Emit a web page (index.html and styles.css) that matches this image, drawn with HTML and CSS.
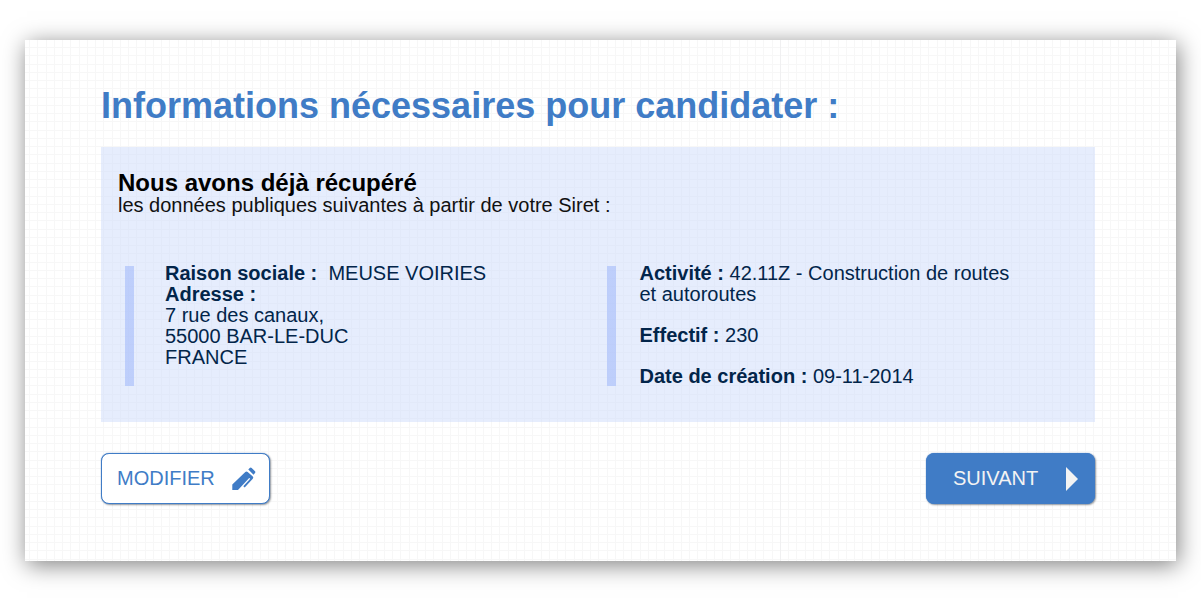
FILE: index.html
```html
<!DOCTYPE html>
<html lang="fr">
<head>
<meta charset="utf-8">
<meta name="viewport" content="width=device-width, initial-scale=1">
<title>Informations nécessaires pour candidater</title>
<link rel="stylesheet" href="styles.css">
</head>
<body>
<main class="card">
  <h1 class="title">Informations nécessaires pour candidater :</h1>
  <section class="panel">
    <h2 class="panel-title">Nous avons déjà récupéré</h2>
    <p class="panel-intro">les données publiques suivantes à partir de votre Siret :</p>
    <div class="columns">
      <div class="info">
        <p><strong>Raison sociale :</strong>&nbsp; MEUSE VOIRIES</p>
        <p><strong>Adresse :</strong></p>
        <p>7 rue des canaux,<br>55000 BAR-LE-DUC<br>FRANCE</p>
      </div>
      <div class="info info-spaced">
        <p><strong>Activité :</strong> 42.11Z - Construction de routes<br>et autoroutes</p>
        <p><strong>Effectif :</strong> 230</p>
        <p><strong>Date de création :</strong> 09-11-2014</p>
      </div>
    </div>
  </section>
  <div class="actions">
    <button type="button" class="btn btn-outline">
      MODIFIER
      <svg class="pencil" width="24" height="24" viewBox="0 0 24 24" aria-hidden="true">
        <path fill="currentColor" d="M0.300 17.500 L13.300 5 Q14.500 4 15.700 5 L20.800 9.600 Q21.800 10.600 20.800 11.700 L12.700 20.600 L11.300 19.200 L18.200 11.800 L17.200 10.900 L6 23 H0.300 Z M16.300 2.600 L17.700 1 Q18.700 0.200 19.700 1 L23 4.200 Q23.800 5 23 6 L21.500 7.700 Z"/>
      </svg>
    </button>
    <button type="button" class="btn btn-solid">
      SUIVANT
      <svg class="arrow" width="12" height="24" viewBox="0 0 12 24" aria-hidden="true">
        <path fill="currentColor" d="M0 0 L12 12 L0 24 Z"/>
      </svg>
    </button>
  </div>
</main>
</body>
</html>
```
FILE: styles.css
```css
* {
  box-sizing: border-box;
}

body {
  margin: 0;
  padding: 40px 25px;
  background: #fff;
  color: #02254a;
  font-family: "Liberation Sans", Arial, sans-serif;
  font-size: 20px;
  line-height: 21px;
}

h1,
h2,
p {
  margin: 0;
}

.card {
  --line: #f7f7f7;
  padding: 45px 81px 57px 76px;
  background-color: #fff;
  background-image:
    linear-gradient(#f0f0f1, #f0f0f1),
    linear-gradient(90deg, var(--line) 1px, transparent 1px 8px, var(--line) 8px 9px, transparent 9px 17px, var(--line) 17px 18px, transparent 18px 25px, var(--line) 25px 26px, transparent 26px),
    linear-gradient(var(--line) 1px, transparent 1px 8px, var(--line) 8px 9px, transparent 9px 17px, var(--line) 17px 18px, transparent 18px 25px, var(--line) 25px 26px, transparent 26px);
  background-size: 1px 100%, 33px 33px, 33px 33px;
  background-position: 755px 0, 4px 0, 0 7px;
  background-repeat: no-repeat, repeat, repeat;
  box-shadow: 2px 4px 22px rgba(0, 0, 0, 0.5);
}

.title {
  color: #407cc6;
  font-size: 36px;
  line-height: 42px;
}

.panel {
  margin-top: 20px;
  padding: 24px 17px 35px;
  background: rgba(205, 219, 252, 0.5);
}

.panel-title {
  color: #000;
  font-size: 24px;
  line-height: 24px;
}

.panel-intro {
  color: #111;
}

.columns {
  display: grid;
  grid-template-columns: 1fr 1fr;
  column-gap: 10px;
  margin: 47px 0 0 7px;
}

.info {
  padding-left: 40px;
  background: linear-gradient(rgba(163, 186, 250, 0.6), rgba(163, 186, 250, 0.6)) 0 3px / 9px 120px no-repeat;
}

.info-spaced {
  display: flex;
  flex-direction: column;
  gap: 20px;
  padding-left: 33px;
}

.actions {
  display: flex;
  justify-content: space-between;
  margin-top: 31px;
}

.btn {
  display: flex;
  align-items: center;
  justify-content: space-between;
  width: 169px;
  height: 51px;
  border: 1px solid #407cc6;
  border-radius: 8px;
  font: inherit;
  box-shadow: 0 0 1px #407cc6, 1px 1px 2px rgba(0, 0, 0, 0.4);
}

.btn-outline {
  padding: 0 13px 0 15px;
  background: #fff;
  color: #407cc6;
}

.btn-solid {
  padding: 0 16px 0 26px;
  background: #407cc6;
  color: #f3f3f3;
}
```
